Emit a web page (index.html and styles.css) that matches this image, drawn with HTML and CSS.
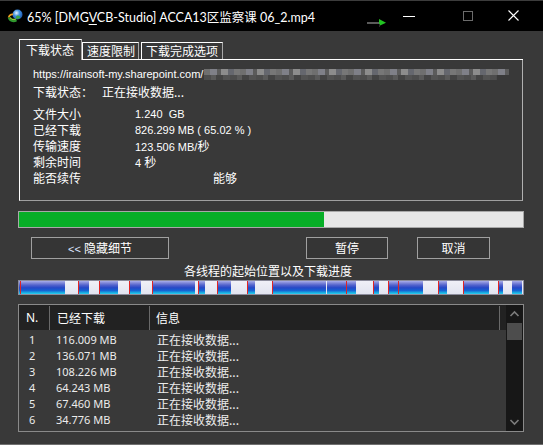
FILE: index.html
```html
<!DOCTYPE html>
<html lang="zh-CN">
<head>
<meta charset="utf-8">
<title>IDM</title>
<link rel="stylesheet" href="styles.css">
</head>
<body>
<div class="titlebar">
  <svg class="appicon" width="16" height="15" viewBox="0 0 16 15">
    <defs>
      <radialGradient id="gl" cx="0.4" cy="0.35" r="0.7">
        <stop offset="0" stop-color="#e8f6ff"/>
        <stop offset="0.45" stop-color="#3f8fe0"/>
        <stop offset="1" stop-color="#1a4fa8"/>
      </radialGradient>
    </defs>
    <circle cx="10.5" cy="5.5" r="5" fill="url(#gl)"/>
    <path d="M9 7.5 C10 6 12 6.5 13.5 8 C12.5 9.8 10.5 10.3 9 9.5 Z" fill="#3aa846"/>
    <path d="M0.8 8.5 C1.5 5.5 4 4 6.5 4.6 L5.8 6.2 C4 6 2.8 7 2.6 8.6 Z" fill="#f0a020"/>
    <path d="M0.8 8.5 C1.5 12.5 6 14.5 10 12.2 L9.3 10.6 C6.5 12 3.5 11.2 2.6 8.6 Z" fill="#2f9b2f"/>
    <path d="M2.6 8.6 C3.5 11.2 6.5 12 9.3 10.6 L8.6 9.4 C6.4 10.3 4.6 9.8 3.9 8.3 Z" fill="#8ccf3a"/>
  </svg>
  <span class="title">65% [DMG<u>V</u>CB-Studio] ACCA13区监察课 06_2.mp4</span>
  <svg class="flag" width="20" height="8" viewBox="0 0 20 8">
    <rect x="0" y="3" width="13" height="2" fill="#5a5a5a"/>
    <polygon points="12,0 19,3.8 12,7" fill="#22c422"/>
    <rect x="12" y="5" width="1" height="3" fill="#2a2a2a"/>
  </svg>
  <span class="cap-min"></span>
  <span class="cap-max"></span>
  <svg class="cap-close" width="11" height="11" viewBox="0 0 11 11">
    <path d="M0.5 0.5 L10.5 10.5 M10.5 0.5 L0.5 10.5" stroke="#ffffff" stroke-width="1.1"/>
  </svg>
</div>

<div class="main">
  <div class="tabs">
    <div class="tab active">下载状态</div>
    <div class="tab t2">速度限制</div>
    <div class="tab t3">下载完成选项</div>
  </div>
  <div class="panel">
    <div class="url-row">
      <span class="en">https://irainsoft-my.sharepoint.com/</span><span class="mosaic"></span>
    </div>
    <div class="status-row">
      <span class="status-label">下载状态：</span><span>正在接收数据...</span>
    </div>
    <div class="info-grid">
      <span>文件大小</span><span class="en">1.240&nbsp; GB</span>
      <span>已经下载</span><span class="en">826.299 MB ( 65.02 % )</span>
      <span>传输速度</span><span><span class="en">123.506 MB/</span>秒</span>
      <span>剩余时间</span><span><span class="en">4 </span>秒</span>
      <span>能否续传</span><span class="resume">能够</span>
    </div>
  </div>

  <div class="progress"><div class="progress-fill" style="width:305px"></div></div>

  <div class="buttons">
    <div class="btn b-hide"><span class="en lt">&lt;&lt; </span>隐藏细节</div>
    <div class="btn b-pause">暂停</div>
    <div class="btn b-cancel">取消</div>
  </div>

  <div class="seg-label">各线程的起始位置以及下载进度</div>
  <div class="segbar">
    <span class="s b" style="width:1px"></span><span class="s r" style="width:1px"></span><span class="s b" style="width:44px"></span><span class="s w" style="width:13px"></span><span class="s r" style="width:1px"></span><span class="s b" style="width:10px"></span><span class="s w" style="width:10px"></span><span class="s r" style="width:1px"></span><span class="s b" style="width:18px"></span><span class="s w" style="width:11px"></span><span class="s r" style="width:1px"></span><span class="s b" style="width:11px"></span><span class="s w" style="width:11px"></span><span class="s r" style="width:1px"></span><span class="s b" style="width:42px"></span><span class="s w" style="width:3px"></span><span class="s r" style="width:1px"></span><span class="s b" style="width:6px"></span><span class="s w" style="width:12px"></span><span class="s r" style="width:1px"></span><span class="s b" style="width:13px"></span><span class="s w" style="width:16px"></span><span class="s r" style="width:1px"></span><span class="s b" style="width:7px"></span><span class="s w" style="width:17px"></span><span class="s r" style="width:1px"></span><span class="s b" style="width:53px"></span><span class="s w" style="width:1px"></span><span class="s b" style="width:19px"></span><span class="s r" style="width:1px"></span><span class="s b" style="width:9px"></span><span class="s w" style="width:17px"></span><span class="s r" style="width:1px"></span><span class="s b" style="width:5px"></span><span class="s w" style="width:9px"></span><span class="s r" style="width:1px"></span><span class="s b" style="width:9px"></span><span class="s r" style="width:1px"></span><span class="s b" style="width:24px"></span><span class="s w" style="width:15px"></span><span class="s r" style="width:1px"></span><span class="s b" style="width:8px"></span><span class="s w" style="width:16px"></span><span class="s r" style="width:1px"></span><span class="s b" style="width:25px"></span><span class="s w" style="width:9px"></span><span class="s r" style="width:1px"></span><span class="s b" style="width:4px"></span><span class="s w" style="width:9px"></span><span class="s b" style="width:10px"></span><span class="s w" style="width:1px"></span>
  </div>

  <div class="list">
    <div class="list-main">
      <div class="list-head">
        <div class="c-n">N.</div>
        <div class="c-d">已经下载</div>
        <div class="c-i">信息</div>
        <div class="c-x"></div>
      </div>
      <div class="list-body">
        <div class="row"><div class="c-n">1</div><div class="c-d">116.009 MB</div><div class="c-i">正在接收数据...</div></div>
        <div class="row"><div class="c-n">2</div><div class="c-d">136.071 MB</div><div class="c-i">正在接收数据...</div></div>
        <div class="row"><div class="c-n">3</div><div class="c-d">108.226 MB</div><div class="c-i">正在接收数据...</div></div>
        <div class="row"><div class="c-n">4</div><div class="c-d">64.243 MB</div><div class="c-i">正在接收数据...</div></div>
        <div class="row"><div class="c-n">5</div><div class="c-d">67.460 MB</div><div class="c-i">正在接收数据...</div></div>
        <div class="row"><div class="c-n">6</div><div class="c-d">34.776 MB</div><div class="c-i">正在接收数据...</div></div>
      </div>
    </div>
    <div class="scrollbar">
      <svg class="arr" width="17" height="17" viewBox="0 0 17 17"><polyline points="4.5,11 8.5,7 12.5,11" fill="none" stroke="#7c7c7c" stroke-width="1.6"/></svg>
      <div class="thumb"></div>
      <div class="track"></div>
      <svg class="arr" width="17" height="17" viewBox="0 0 17 17"><polyline points="4.5,6 8.5,10 12.5,6" fill="none" stroke="#7c7c7c" stroke-width="1.6"/></svg>
    </div>
  </div>
</div>
<div class="footer-line"></div>
</body>
</html>
```

FILE: styles.css
```css
* { box-sizing: border-box; }
html, body {
  margin: 0;
  padding: 0;
}
body {
  width: 543px;
  height: 445px;
  overflow: hidden;
  background: #393939;
  color: #ffffff;
  font-family: "Noto Sans CJK SC", "Liberation Sans", sans-serif;
  font-size: 12px;
}

/* ---------- title bar ---------- */
.titlebar {
  height: 31px;
  background: #000000;
  border-top: 1px solid #3c3c3c;
  display: flex;
  align-items: center;
  padding-right: 24px;
}
.appicon { margin-left: 7px; flex: none; }
.title {
  margin-left: 4px;
  font-family: "Lato", "Noto Sans CJK SC", sans-serif;
  font-size: 12.5px;
  color: #ffffff;
  white-space: nowrap;
}
.title u { text-decoration-thickness: 1px; text-underline-offset: 2px; }
.flag { margin-left: auto; margin-top: 14px; flex: none; }
.cap-min {
  margin-left: 16px;
  width: 12px;
  height: 1px;
  background: #ffffff;
  flex: none;
}
.cap-max {
  margin-left: 48px;
  width: 10px;
  height: 10px;
  border: 1px solid #6b6b6b;
  flex: none;
  margin-top: -1px;
}
.cap-close { margin-left: 35px; flex: none; margin-top: -1px; }

/* ---------- main ---------- */
.main {
  padding: 8px 19px 0 18px;
}
.en {
  font-family: "Liberation Sans", sans-serif;
  font-size: 11px;
}

.tabs {
  margin: 0 1px;
  height: 21px;
  display: flex;
  background: linear-gradient(#ffffff, #ffffff) left bottom / 100% 1px no-repeat;
}
.tab {
  height: 17px;
  margin-top: 3px;
  line-height: 16px;
  border-top: 1px solid #ffffff;
  border-left: 1px solid #ffffff;
  border-right: 1px solid #a8a8a8;
  white-space: nowrap;
}
.tab.active {
  height: 21px;
  margin-top: 0;
  line-height: 20px;
  padding: 0 7px 0 6px;
  background: #393939;
}
.tab.t2 { padding: 0 3px 0 4px; }
.tab.t3 { padding: 0 4px; margin-left: 2px; }

.panel {
  margin: 0 1px;
  height: 141px;
  border-left: 1px solid #ffffff;
  border-right: 1px solid #b0b0b0;
  border-bottom: 1px solid #a0a0a0;
  padding: 6px 0 0 13px;
}
.url-row {
  height: 16px;
  line-height: 16px;
  display: flex;
  align-items: center;
  white-space: nowrap;
}
.mosaic {
  margin-left: 1px;
  width: 305px;
  height: 12px;
  margin-top: 1px;
  background:
    repeating-linear-gradient(90deg, #6f6f6f 0 6px, #7f8088 6px 13px, #5b5b5b 13px 17px, #8c8c8c 17px 24px, #65676e 24px 30px, #777777 30px 36px),
    repeating-linear-gradient(90deg, #4d4d4d 0 7px, #5a5a5a 7px 12px, #444444 12px 19px, #535353 19px 26px);
  background-size: 100% 6px, 96% 5px;
  background-position: 0 0, 0 6px;
  background-repeat: no-repeat;
}
.status-row {
  margin-top: 2px;
  height: 16px;
  line-height: 16px;
  display: flex;
}
.status-label { width: 69px; }
.info-grid {
  margin-top: 6px;
  display: grid;
  grid-template-columns: 102px auto;
  grid-auto-rows: 16px;
  line-height: 16px;
  white-space: nowrap;
}
.resume { padding-left: 78px; }

/* ---------- progress ---------- */
.progress {
  margin-top: 10px;
  height: 17px;
  border: 1px solid #a8a8a8;
  background: #e6e6e6;
}
.progress-fill {
  height: 100%;
  background: #07ae27;
}

/* ---------- buttons ---------- */
.buttons {
  margin-top: 9px;
  display: flex;
  height: 22px;
}
.btn {
  height: 22px;
  border: 1px solid #a0a0a0;
  background: #353535;
  line-height: 20px;
  text-align: center;
  white-space: nowrap;
}
.b-hide { margin-left: 13px; width: 138px; }
.b-pause { margin-left: 137px; width: 82px; }
.b-cancel { margin-left: 29px; width: 73px; }
.lt { color: #dfe6ff; }

.seg-label {
  margin-top: 4px;
  height: 16px;
  line-height: 16px;
  text-align: center;
  padding-right: 6px;
}

/* ---------- segment bar ---------- */
.segbar {
  margin-top: 1px;
  height: 15px;
  border: 1px solid #8c8c9c;
  display: flex;
  overflow: hidden;
}
.s { height: 100%; flex: none; }
.s.b {
  background: linear-gradient(to bottom, #a9aeea 0%, #7d85d8 16%, #5262cc 32%, #2748c6 52%, #1560d2 72%, #1aa6e0 88%, #28d4f0 100%);
}
.s.w {
  background: linear-gradient(to bottom, #f0f0f8 0%, #e2e4f0 100%);
}
.s.r { background: #e02424; }

/* ---------- list ---------- */
.list {
  margin-top: 9px;
  height: 128px;
  border: 1px solid #8a8a8a;
  display: flex;
}
.list-main {
  flex: 1;
  min-width: 0;
  overflow: hidden;
}
.list-head {
  height: 25px;
  background: #222222;
  display: flex;
  line-height: 25px;
  font-size: 12px;
}
.list-head .c-n, .list-head .c-d, .list-head .c-i {
  border-right: 1px solid #6a6a6a;
  height: 24px;
  margin-top: 1px;
  line-height: 23px;
}
.c-n { width: 31px; padding-left: 7px; flex: none; }
.c-d { width: 100px; padding-left: 7px; flex: none; }
.c-i { width: 350px; padding-left: 6px; flex: none; }
.c-x { flex: 1; }
.list-head .c-n { font-family: "Noto Sans", sans-serif; }
.list-body {
  padding-top: 2px;
  color: #ececec;
}
.row {
  display: flex;
  height: 16px;
  line-height: 16px;
  white-space: nowrap;
}
.row .c-n { padding-left: 10px; font-family: "Noto Sans", sans-serif; font-size: 11px; }
.row .c-d { padding-left: 6px; font-family: "Noto Sans", sans-serif; font-size: 11px; }
.row .c-i { padding-left: 7px; }

.scrollbar {
  width: 17px;
  flex: none;
  background: #171717;
  display: flex;
  flex-direction: column;
}
.arr { display: block; flex: none; }
.thumb {
  margin: 1px 1px 0 1px;
  height: 17px;
  background: #4d4d4d;
  flex: none;
}
.track { flex: 1; }

.footer-line {
  margin-top: 12px;
  height: 1px;
  background: #707070;
}
```
